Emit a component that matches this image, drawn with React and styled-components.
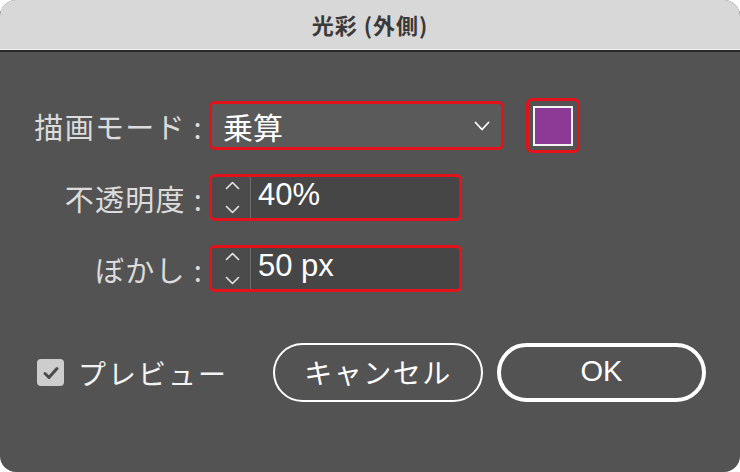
import React from "react";
import styled, { createGlobalStyle } from "styled-components";

const Global = createGlobalStyle`
  html, body { margin: 0; padding: 0; background: #ffffff; }
  body { font-family: "Noto Sans CJK JP", "Noto Sans", sans-serif; }
  #root { width: 740px; height: 472px; }
`;

const Window = styled.div`
  width: 740px;
  height: 472px;
  border-radius: 16px;
  overflow: hidden;
  background: #535353;
  display: flex;
  flex-direction: column;
`;

const TitleBar = styled.div`
  height: 50px;
  flex: none;
  background: #d8d8d8;
  border-bottom: 1px solid #f0f0f0;
  box-shadow: 0 2px 0 #2a2a2a;
  display: flex;
  align-items: center;
  justify-content: center;
  font-size: 22px;
  font-weight: 700;
  letter-spacing: 1px;
  color: #3a3a3a;
  padding-bottom: 1px;
  box-sizing: border-box;
`;

const Body = styled.div`
  flex: 1;
  display: flex;
  flex-direction: column;
  padding-top: 51px;
`;

const Form = styled.div`
  display: flex;
  flex-direction: column;
  gap: 24px;
`;

const Row = styled.div`
  display: flex;
  align-items: center;
  height: ${(p) => p.$h}px;
`;

const Label = styled.div`
  width: 209px;
  flex: none;
  box-sizing: border-box;
  padding-right: 6px;
  text-align: right;
  font-size: 29px;
  color: #dcdcdc;
  letter-spacing: 1.3px;
  white-space: nowrap;
`;

const Highlight = styled.div`
  box-sizing: border-box;
  border: 3px solid #e3121b;
  border-radius: 6px;
  width: ${(p) => p.$w}px;
  height: ${(p) => p.$h}px;
  display: flex;
  overflow: hidden;
`;

const Select = styled.div`
  flex: 1;
  display: flex;
  align-items: center;
  justify-content: space-between;
  background: #5a5a5a;
  padding: 0 11px 0 11px;
  font-size: 30px;
  color: #ffffff;
`;

const SwatchWrap = styled.div`
  margin-left: 22px;
  box-sizing: border-box;
  width: 54px;
  height: 55px;
  border: 3px solid #e3121b;
  border-radius: 6px;
  display: flex;
  align-items: center;
  justify-content: center;
`;

const Swatch = styled.div`
  width: 40px;
  height: 40px;
  box-sizing: border-box;
  border: 2px solid #f4f4f4;
  background: ${(p) => p.$color};
`;

const Stepper = styled.div`
  width: 39px;
  flex: none;
  background: #4b4b4b;
  border-right: 1px solid #6e6e6e;
  display: flex;
  flex-direction: column;
  align-items: center;
  justify-content: center;
  gap: 15px;
  padding-left: 2px;
  box-sizing: border-box;
`;

const Input = styled.div`
  flex: 1;
  background: #464646;
  display: flex;
  align-items: center;
  padding-left: 7px;
  font-family: "Liberation Sans", "Noto Sans CJK JP", sans-serif;
  font-size: 31px;
  color: #ffffff;
  padding-bottom: 5px;
`;

const Footer = styled.div`
  display: flex;
  align-items: center;
  margin-top: 51px;
  padding-left: 37px;
`;

const Check = styled.div`
  width: 27px;
  height: 27px;
  border-radius: 4px;
  background: #cdcdcd;
  display: flex;
  align-items: center;
  justify-content: center;
`;

const CheckLabel = styled.div`
  margin-left: 14px;
  font-size: 28px;
  color: #f2f2f2;
  letter-spacing: 2px;
  width: 195px;
  white-space: nowrap;
`;

const Button = styled.div`
  box-sizing: border-box;
  width: ${(p) => p.$w}px;
  height: 59px;
  margin-left: ${(p) => p.$ml}px;
  border: ${(p) => p.$bw}px solid #ffffff;
  border-radius: 30px;
  display: flex;
  align-items: center;
  justify-content: center;
  font-size: ${(p) => (p.$latin ? 29 : 28)}px;
  letter-spacing: ${(p) => (p.$latin ? 0 : 1.5)}px;
  color: #ffffff;
  font-family: ${(p) => (p.$latin ? '"Liberation Sans", sans-serif' : '"Noto Sans CJK JP", sans-serif')};
  padding-bottom: 2px;
`;

const Chevron = ({ up, w = 16, h = 10, color = "#ffffff", sw = 1.8 }) => (
  <svg width={w} height={h} viewBox={`0 0 ${w} ${h}`}>
    <path
      d={up ? `M1.5 ${h - 1.5} L${w / 2} 1.5 L${w - 1.5} ${h - 1.5}` : `M1.5 1.5 L${w / 2} ${h - 1.5} L${w - 1.5} 1.5`}
      fill="none"
      stroke={color}
      strokeWidth={sw}
      strokeLinecap="round"
      strokeLinejoin="round"
    />
  </svg>
);

const NumberField = ({ value }) => (
  <Highlight $w={253} $h={47}>
    <Stepper>
      <Chevron up w={15} h={9} color="#e6e6e6" sw={1.6} />
      <Chevron w={15} h={9} color="#e6e6e6" sw={1.6} />
    </Stepper>
    <Input>{value}</Input>
  </Highlight>
);

export default function App() {
  return (
    <>
      <Global />
      <Window>
        <TitleBar>光彩 (外側)</TitleBar>
        <Body>
          <Form>
            <Row $h={49}>
              <Label>描画モード :</Label>
              <Highlight $w={295} $h={49}>
                <Select>
                  <span>乗算</span>
                  <Chevron w={16} h={10} />
                </Select>
              </Highlight>
              <SwatchWrap>
                <Swatch $color="#8d3a97" />
              </SwatchWrap>
            </Row>
            <Row $h={47}>
              <Label>不透明度 :</Label>
              <NumberField value="40%" />
            </Row>
            <Row $h={47}>
              <Label>ぼかし :</Label>
              <NumberField value="50 px" />
            </Row>
          </Form>
          <Footer>
            <Check>
              <svg width="18" height="16" viewBox="0 0 18 16">
                <path d="M3 8.5 L7 12.5 L15 3.5" fill="none" stroke="#4a4a4a" strokeWidth="3" strokeLinecap="round" strokeLinejoin="round" />
              </svg>
            </Check>
            <CheckLabel>プレビュー</CheckLabel>
            <Button $w={210} $ml={0} $bw={2}>キャンセル</Button>
            <Button $w={209} $ml={14} $bw={4} $latin>OK</Button>
          </Footer>
        </Body>
      </Window>
    </>
  );
}
